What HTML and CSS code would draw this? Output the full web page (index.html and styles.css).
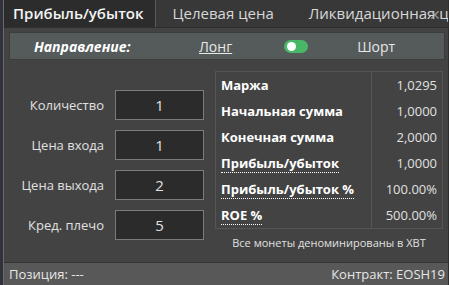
FILE: index.html
```html
<!DOCTYPE html>
<html lang="ru">
<head>
    <meta charset="UTF-8">
    <title>Калькулятор</title>
    <link rel="stylesheet" href="styles.css">
</head>
<body>
    <div class="edge"></div>
    <div class="panel">
        <div class="tabs">
            <div class="tab active">Прибыль/убыток</div>
            <div class="tab">Целевая цена</div>
            <div class="tab">Ликвидационная цена</div>
            <span class="close">✕</span>
        </div>
        <div class="content">
            <div class="direction">
                <span class="dir-label">Направление:</span>
                <span class="dir-long">Лонг</span>
                <span class="toggle"><span class="knob"></span></span>
                <span class="dir-short">Шорт</span>
            </div>
            <div class="main">
                <div class="inputs">
                    <div class="field"><label>Количество</label><div class="box">1</div></div>
                    <div class="field"><label>Цена входа</label><div class="box">1</div></div>
                    <div class="field"><label>Цена выхода</label><div class="box">2</div></div>
                    <div class="field"><label>Кред. плечо</label><div class="box">5</div></div>
                </div>
                <div class="results">
                    <table>
                        <tr><td>Маржа</td><td>1,0295</td></tr>
                        <tr><td>Начальная сумма</td><td>1,0000</td></tr>
                        <tr><td>Конечная сумма</td><td>2,0000</td></tr>
                        <tr><td><span class="dotted">Прибыль/убыток</span></td><td>1,0000</td></tr>
                        <tr><td><span class="dotted">Прибыль/убыток %</span></td><td>100.00%</td></tr>
                        <tr><td><span class="dotted">ROE %</span></td><td>500.00%</td></tr>
                    </table>
                    <div class="note">Все монеты деноминированы в XBT</div>
                </div>
            </div>
        </div>
        <div class="footer">
            <span>Позиция: ---</span>
            <span>Контракт: EOSH19</span>
        </div>
    </div>
</body>
</html>
```

FILE: styles.css
```css
body {
    margin: 0;
    width: 449px;
    height: 285px;
    display: flex;
    background-color: #2a2a2a;
    font-family: "Open Sans", "Noto Sans", sans-serif;
    color: #e6e6e6;
    overflow: hidden;
}
.edge {
    width: 3px;
    background-color: #30343a;
}
.panel {
    flex: 1;
    display: flex;
    flex-direction: column;
    border-left: 1px solid #6a6a6a;
    border-right: 1px solid #2e2e2e;
    background-color: #434343;
    min-width: 0;
}
.tabs {
    position: relative;
    display: flex;
    height: 27px;
    background-color: #383838;
    border-bottom: 1px solid #2f2f2f;
    overflow: hidden;
    white-space: nowrap;
}
.tab {
    padding: 0 18px 0 17px;
    font-size: 15px;
    line-height: 27px;
    color: #d8d8d8;
}
.tab.active {
    background-color: #2c2c2c;
    color: #f4f4f4;
    font-weight: 600;
    padding: 0 11px 0 9px;
    border-right: 1px solid #5a5a5a;
}
.close {
    position: absolute;
    right: 7px;
    top: 5px;
    font-size: 14px;
    color: #b0b0b0;
    opacity: 0.75;
}
.content {
    flex: 1;
    padding: 4px 3px 0 5px;
}
.direction {
    display: flex;
    align-items: center;
    height: 26px;
    background-color: #555a5a;
    border: 1px solid #3c3c3c;
    font-size: 14px;
}
.dir-label {
    font-weight: 700;
    font-style: italic;
    color: #fff;
    margin-left: 24px;
    width: 165px;
}
.dir-long {
    text-decoration: underline;
    color: #e8e8e8;
}
.toggle {
    position: relative;
    width: 24px;
    height: 13px;
    border-radius: 7px;
    background-color: #48b868;
    margin-left: 52px;
}
.knob {
    position: absolute;
    left: 3px;
    top: 2px;
    width: 9px;
    height: 9px;
    border-radius: 50%;
    background-color: #fff;
}
.dir-short {
    margin-left: 49px;
    color: #e8e8e8;
}
.main {
    display: flex;
    gap: 11px;
    padding-top: 10px;
}
.inputs {
    display: flex;
    flex-direction: column;
    gap: 10px;
    padding-top: 20px;
    width: 195px;
}
.field {
    display: flex;
    align-items: center;
    justify-content: flex-end;
    gap: 11px;
}
.field label {
    font-size: 13px;
    color: #e0e0e0;
}
.box {
    width: 87px;
    height: 28px;
    border: 1px solid #7a7a7a;
    background-color: #2b2b2b;
    font-size: 15px;
    line-height: 28px;
    text-align: center;
    color: #e0e0e0;
}
.results {
    width: 228px;
    padding-top: 1px;
}
table {
    width: 100%;
    border-collapse: collapse;
    border: 1px solid #555;
    font-size: 13px;
}
td {
    height: 26px;
    padding: 0 5px;
}
td:first-child {
    font-weight: 700;
    color: #fff;
    border-right: 1px solid #555;
}
td:last-child {
    text-align: right;
    color: #e0e0e0;
    width: 60px;
}
.dotted {
    border-bottom: 1px dotted #fff;
}
.note {
    text-align: center;
    font-size: 11px;
    color: #e0e0e0;
    margin-top: 6px;
}
.footer {
    display: flex;
    justify-content: space-between;
    height: 22px;
    padding: 0 3px 0 5px;
    background-color: #585858;
    border-top: 1px solid #333;
    font-size: 13px;
    line-height: 22px;
    color: #e6e6e6;
}
```
